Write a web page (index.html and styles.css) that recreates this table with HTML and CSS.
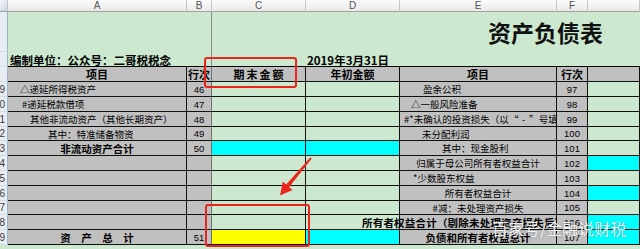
FILE: index.html
```html
<!DOCTYPE html>
<html lang="zh-CN">
<head>
<meta charset="utf-8">
<title>资产负债表</title>
<link rel="stylesheet" href="styles.css">
</head>
<body>
<div class="sheet">
  <div class="ch corner"></div>
  <div class="ch">A</div>
  <div class="ch">B</div>
  <div class="ch">C</div>
  <div class="ch">D</div>
  <div class="ch">E</div>
  <div class="ch">F</div>
  <div class="ch"></div>

  <div class="rh"></div>
  <div class="title-left"></div>
  <div class="title">资产负债表</div>

  <div class="rh"></div>
  <div class="info">编制单位：公众号：二哥税税念</div>
  <div class="plain"></div>
  <div class="date">2019年3月31日</div>

  <div class="rh"></div>
  <div class="c gray hd">项目</div>
  <div class="c gray hd bc">行次</div>
  <div class="c gray hd wide">期末金额</div>
  <div class="c gray hd">年初金额</div>
  <div class="c gray hd">项目</div>
  <div class="c gray hd">行次</div>
  <div class="c gray hd"></div>

  <div class="rh">39</div>
  <div class="c gray pl12">△递延所得税资产</div>
  <div class="c gray num bc">46</div>
  <div class="c grn"></div>
  <div class="c grn"></div>
  <div class="c gray pl23">盈余公积</div>
  <div class="c gray num">97</div>
  <div class="c grn"></div>

  <div class="rh">40</div>
  <div class="c gray pl14">#递延税款借项</div>
  <div class="c gray num bc">47</div>
  <div class="c grn"></div>
  <div class="c grn"></div>
  <div class="c gray pl11">△一般风险准备</div>
  <div class="c gray num">98</div>
  <div class="c grn"></div>

  <div class="rh">41</div>
  <div class="c gray pl22">其他非流动资产（其他长期资产）</div>
  <div class="c gray num bc">48</div>
  <div class="c grn"></div>
  <div class="c grn"></div>
  <div class="c gray pl4"><span class="line">#*未确认的投资损失（以<span class="fw">“</span><span class="fw">-</span><span class="fw">”</span>号填列）</span></div>
  <div class="c gray num">99</div>
  <div class="c grn"></div>

  <div class="rh">42</div>
  <div class="c gray pl40">其中：特准储备物资</div>
  <div class="c gray num bc">49</div>
  <div class="c grn"></div>
  <div class="c grn"></div>
  <div class="c gray pl22">未分配利润</div>
  <div class="c gray num">100</div>
  <div class="c grn"></div>

  <div class="rh">43</div>
  <div class="c gray ctr b">非流动资产合计</div>
  <div class="c gray num bc">50</div>
  <div class="c cyan"></div>
  <div class="c cyan"></div>
  <div class="c gray pl42">其中：现金股利</div>
  <div class="c gray num">101</div>
  <div class="c grn"></div>

  <div class="rh">44</div>
  <div class="c gray"></div>
  <div class="c gray bc"></div>
  <div class="c grn"></div>
  <div class="c grn"></div>
  <div class="c gray ctr">归属于母公司所有者权益合计</div>
  <div class="c gray num">102</div>
  <div class="c cyan"></div>

  <div class="rh">45</div>
  <div class="c gray"></div>
  <div class="c gray bc"></div>
  <div class="c grn"></div>
  <div class="c grn"></div>
  <div class="c gray pl13">*少数股东权益</div>
  <div class="c gray num">103</div>
  <div class="c grn"></div>

  <div class="rh">46</div>
  <div class="c gray"></div>
  <div class="c gray bc"></div>
  <div class="c grn"></div>
  <div class="c grn"></div>
  <div class="c gray ctr">所有者权益合计</div>
  <div class="c gray num">104</div>
  <div class="c cyan"></div>

  <div class="rh">47</div>
  <div class="c gray"></div>
  <div class="c gray bc"></div>
  <div class="c grn"></div>
  <div class="c grn"></div>
  <div class="c gray ctr">#减：未处理资产损失</div>
  <div class="c gray num">105</div>
  <div class="c grn"></div>

  <div class="rh">48</div>
  <div class="c gray"></div>
  <div class="c gray bc"></div>
  <div class="c grn"></div>
  <div class="c grn"></div>
  <div class="c gray b spill"><span>所有者权益合计（剔除未处理资产损失后）</span></div>
  <div class="c gray num">106</div>
  <div class="c cyan"></div>

  <div class="rh">49</div>
  <div class="c gray ctr b">资　产　总　计</div>
  <div class="c gray num bc">51</div>
  <div class="c yel"></div>
  <div class="c cyan"></div>
  <div class="c gray ctr b">负债和所有者权益总计</div>
  <div class="c gray num">107</div>
  <div class="c cyan"></div>
</div>

<div class="mark mark-top"></div>
<div class="mark mark-bottom"></div>
<svg class="arrow" width="640" height="249" viewBox="0 0 640 249">
  <polygon points="311.8,158.6 289.2,187.1 292.6,190 280,195.5 282.8,181.6 286.2,184.5 310.2,157.4" fill="#e8261e"/>
</svg>
<div class="watermark">百家号/金融说财税</div>
</body>
</html>
```

FILE: styles.css
```css
html, body {
  margin: 0;
  padding: 0;
}

body {
  width: 640px;
  height: 249px;
  overflow: hidden;
  position: relative;
  background: #cce8cf;
  font-family: "Noto Sans CJK SC", "Noto Sans", sans-serif;
  color: #000;
}

.sheet {
  display: grid;
  grid-template-columns: 8px 179px 25px 94px 94px 157px 31px 52px;
  grid-template-rows: 12px 40px 15px 15px 15px 15px 15px 14px 15px 15px 15px 15px 14px 15px 15px;
}

/* column headers */
.ch {
  box-sizing: border-box;
  display: flex;
  align-items: center;
  justify-content: center;
  background: linear-gradient(#fbfbfb, #e9e9e9);
  border-right: 1px solid #c4c4c4;
  border-bottom: 1px solid #a3a3a3;
  font-family: "Liberation Sans", Arial, sans-serif;
  font-size: 10px;
  color: #555;
}

.corner {
  background: linear-gradient(135deg, #f4f7fb, #c9d6e8);
}

/* row headers */
.rh {
  box-sizing: border-box;
  display: flex;
  align-items: center;
  justify-content: flex-end;
  padding-right: 2px;
  overflow: hidden;
  background: #e8edf4;
  border-right: 1px solid #9fb2ca;
  border-bottom: 1px solid #d3dbe6;
  font-family: "Liberation Sans", Arial, sans-serif;
  font-size: 10px;
  color: #3a3a3a;
}

/* title area */
.title-left {
  grid-column: span 2;
  border-right: 1px solid #8c8c8c;
}

.title {
  grid-column: span 5;
  display: flex;
  align-items: center;
  padding-left: 276px;
  font-size: 23px;
  font-weight: bold;
  color: #111;
}

.info {
  grid-column: span 2;
  box-sizing: border-box;
  display: flex;
  align-items: center;
  padding-left: 2px;
  padding-top: 1px;
  border-right: 1px solid #8c8c8c;
  border-bottom: 1px solid #000;
  font-size: 11.5px;
  font-weight: bold;
  white-space: nowrap;
}

.plain {
  border-bottom: 1px solid #000;
}

.date {
  grid-column: span 4;
  box-sizing: border-box;
  display: flex;
  align-items: center;
  padding-left: 1px;
  padding-top: 1px;
  border-bottom: 1px solid #000;
  font-size: 11.5px;
  font-weight: bold;
}

/* cells */
.c {
  box-sizing: border-box;
  display: flex;
  align-items: center;
  border-right: 1px solid #111;
  border-bottom: 1px solid #111;
  white-space: nowrap;
  overflow: hidden;
  font-size: 9.5px;
}

.gray { background: #c0c0c0; }
.grn { background: #cce8cf; }
.cyan { background: #00ffff; }
.yel { background: #ffff00; }

.bc { border-right: 1px solid #6e6e6e; }

.hd {
  justify-content: center;
  font-size: 11px;
  font-weight: bold;
}

.wide {
  letter-spacing: 2px;
  padding-left: 2px;
}

.line {
  flex: none;
}

.fw {
  display: inline-block;
  width: 1.05em;
  text-align: center;
}

.num {
  justify-content: center;
  font-family: "Liberation Sans", Arial, sans-serif;
  font-size: 9.5px;
}

.ctr { justify-content: center; }

.b {
  font-weight: bold;
  font-size: 10.5px;
}

.pl4 { padding-left: 4px; }
.pl11 { padding-left: 11px; }
.pl12 { padding-left: 12px; }
.pl13 { padding-left: 13px; }
.pl14 { padding-left: 14px; }
.pl22 { padding-left: 22px; }
.pl23 { padding-left: 23px; }
.pl40 { padding-left: 40px; }
.pl42 { padding-left: 42px; }

.spill {
  overflow: visible;
}

.spill span {
  margin-left: -38px;
  letter-spacing: 0.2px;
}

/* annotations */
.mark {
  position: absolute;
  box-sizing: border-box;
  border: 2px solid #e8261e;
  border-radius: 3px;
}

.mark-top {
  left: 204px;
  top: 57px;
  width: 93px;
  height: 31px;
}

.mark-bottom {
  left: 205px;
  top: 204px;
  width: 105px;
  height: 43px;
}

.arrow {
  position: absolute;
  left: 0;
  top: 0;
}

.watermark {
  position: absolute;
  left: 492px;
  top: 217px;
  font-size: 16px;
  line-height: 22px;
  color: rgba(255, 255, 255, 0.92);
  text-shadow: 0 0 2px rgba(0, 0, 0, 0.35);
  white-space: nowrap;
}
```
